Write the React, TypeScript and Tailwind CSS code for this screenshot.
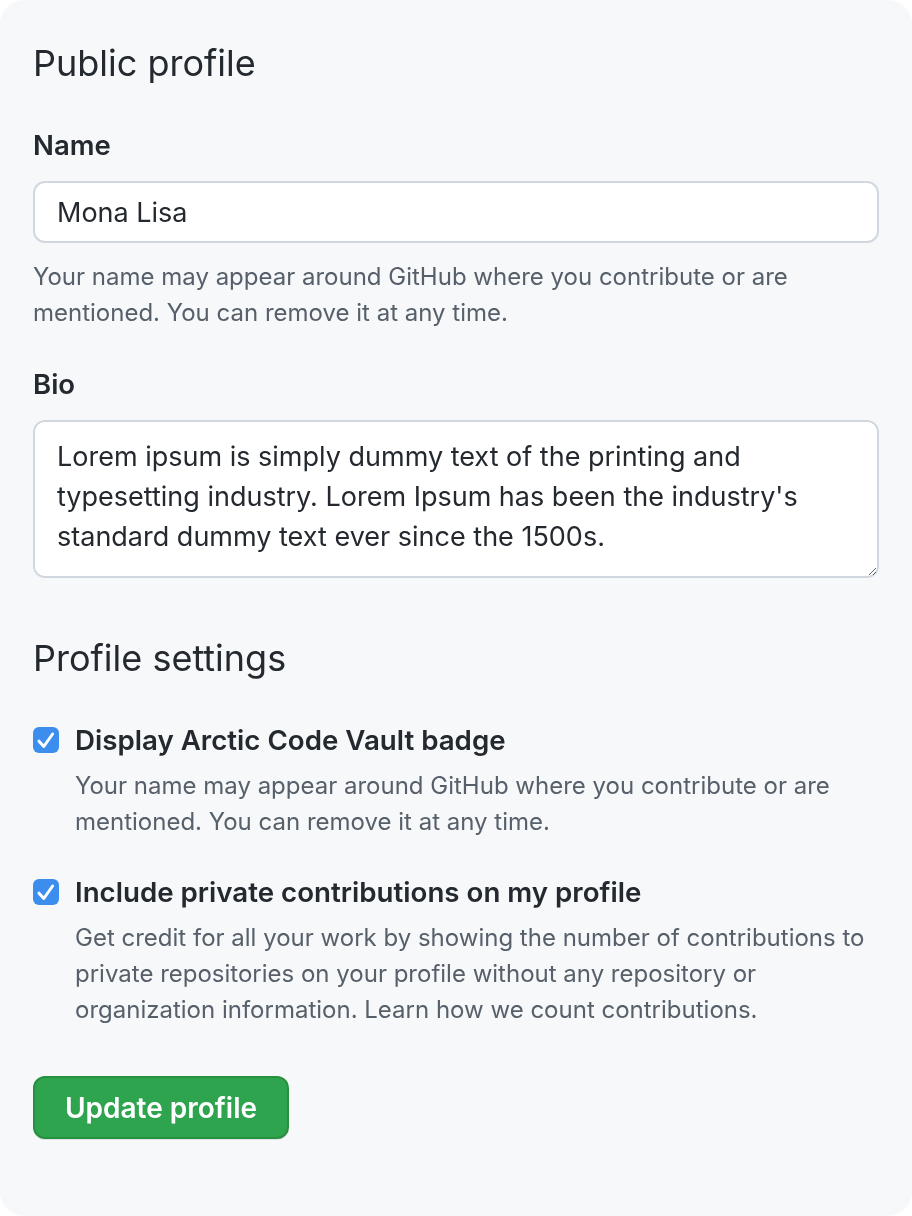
import React from "react";

function Check() {
	return (
		<span className="flex h-[26px] w-[26px] shrink-0 items-center justify-center rounded-[6px] bg-[#3b8dee]">
			<svg viewBox="0 0 26 26" className="h-[26px] w-[26px]" fill="none">
				<path d="M6 14.2l4.8 5.3L19.6 7" stroke="white" strokeWidth="3" strokeLinecap="round" strokeLinejoin="round" />
			</svg>
		</span>
	);
}

function CheckItem({ title, children }: { title: string; children: React.ReactNode }) {
	return (
		<div>
			<label className="flex items-center gap-4">
				<Check />
				<span className="text-[27.7px] font-semibold leading-[32px] text-[#24292f]">{title}</span>
			</label>
			<p className="mt-3 pl-[42px] text-[24px] leading-[36px] text-[#57606a]">{children}</p>
		</div>
	);
}

export default function App() {
	return (
		<div className="min-h-[1216px] bg-white" style={{ fontFamily: "Inter, 'Noto Sans', sans-serif" }}>
			<div className="min-h-[1216px] rounded-[24px] bg-[#f6f8fa] px-[33px] pt-[41px] pb-[77px]">
				<h2 className="text-[36px] leading-[44px] text-[#24292f]">Public profile</h2>

				{/* Name */}
				<div className="mt-[44px]">
					<label className="block text-[27.5px] font-semibold leading-[32px] text-[#24292f]">Name</label>
					<input
						className="mt-5 block h-[62px] w-full rounded-[12px] border-2 border-[#d0d7de] bg-white px-[22px] text-[27px] text-[#24292f] outline-none"
						defaultValue="Mona Lisa"
					/>
					<p className="mt-4 text-[24px] leading-[36px] text-[#57606a]">
						Your name may appear around GitHub where you contribute or are mentioned. You can remove it at any time.
					</p>
				</div>

				{/* Bio */}
				<div className="mt-[37px]">
					<label className="block text-[27.5px] font-semibold leading-[32px] text-[#24292f]">Bio</label>
					<textarea
						className="mt-5 block h-[158px] w-full resize-y rounded-[12px] border-2 border-[#d0d7de] bg-white px-[22px] pt-[15px] pb-5 text-[27px] leading-[40px] text-[#24292f] outline-none"
						defaultValue="Lorem ipsum is simply dummy text of the printing and typesetting industry. Lorem Ipsum has been the industry's standard dummy text ever since the 1500s."
					/>
				</div>

				<h2 className="mt-[58px] text-[36px] leading-[44px] text-[#24292f]">Profile settings</h2>

				<div className="mt-[44px] flex flex-col gap-[36px]">
					<CheckItem title="Display Arctic Code Vault badge">
						Your name may appear around GitHub where you contribute or are mentioned. You can remove it at any time.
					</CheckItem>
					<CheckItem title="Include private contributions on my profile">
						Get credit for all your work by showing the number of contributions to private repositories on your profile without any repository or organization information. Learn how we count contributions.
					</CheckItem>
				</div>

				<button className="mt-12 h-[63px] w-[256px] rounded-[12px] border-2 border-[#27903f] bg-[#2ea44f] text-[28px] font-semibold text-white shadow-[0_1px_0_rgba(27,31,35,0.1)]">
					Update profile
				</button>
			</div>
		</div>
	);
}
